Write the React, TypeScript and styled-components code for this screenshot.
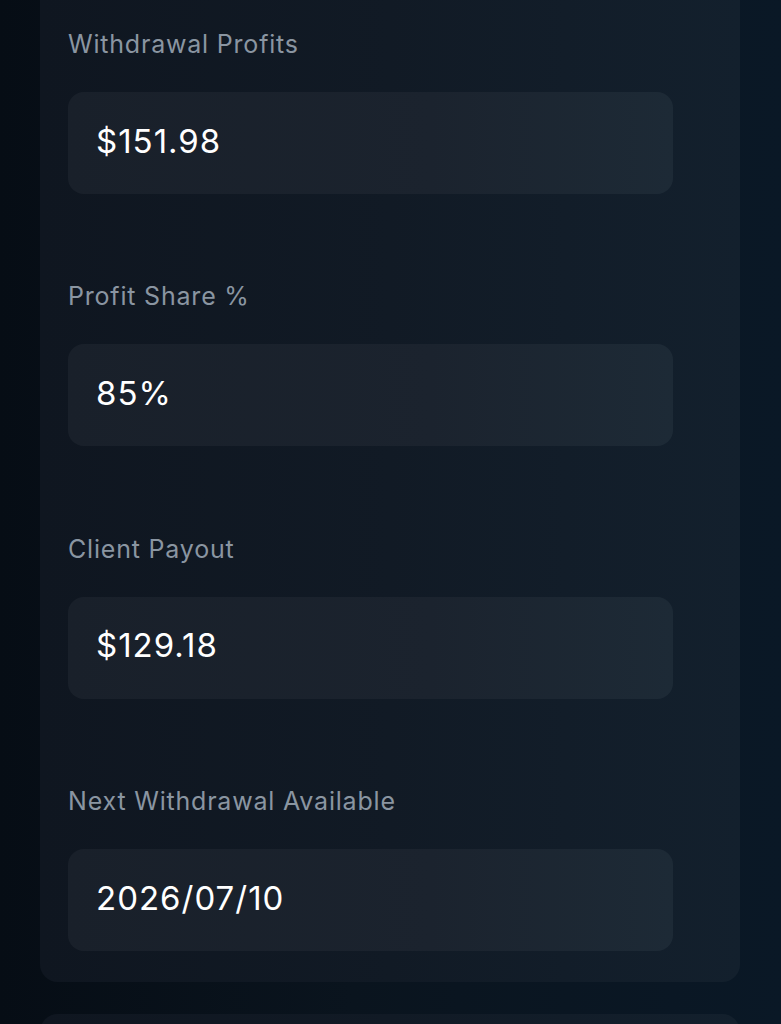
import React from "react";
import styled, { createGlobalStyle } from "styled-components";

const Global = createGlobalStyle`
  html, body {
    margin: 0;
    padding: 0;
    background: linear-gradient(90deg, #070e16 0%, #0a1520 50%, #0a1a28 100%);
    min-height: 100%;
  }
  body {
    font-family: Inter, "Noto Sans", "Liberation Sans", sans-serif;
    -webkit-font-smoothing: antialiased;
  }
`;

const Page = styled.div`
  width: 781px;
  height: 1024px;
  overflow: hidden;
  box-sizing: border-box;
  padding: 0 41px 0 40px;
  display: flex;
  flex-direction: column;
  gap: 32px;
  background: linear-gradient(90deg, #060d15 0%, #0a141e 45%, #0a1826 100%);
`;

const Card = styled.section<{ $open?: boolean; $h?: number }>`
  box-sizing: border-box;
  background: linear-gradient(90deg, #0f1620 0%, #111a25 50%, #13202d 100%);
  border-radius: ${(p) => (p.$open ? "0 0 18px 18px" : "18px")};
  padding: 28px 28px 31px;
  display: flex;
  flex-direction: column;
  gap: 86.4px;
  flex-shrink: 0;
  ${(p) => (p.$h ? `height: ${p.$h}px;` : "")}
`;

const Field = styled.div`
  display: flex;
  flex-direction: column;
  gap: 32px;
`;

const Label = styled.label`
  font-size: 25px;
  line-height: 32px;
  color: #8a95a1;
  font-weight: 400;
  letter-spacing: 0.8px;
`;

const ValueBox = styled.div`
  box-sizing: border-box;
  width: 605px;
  height: 102px;
  border-radius: 16px;
  background: linear-gradient(90deg, #19202a 0%, #1b232e 60%, #1d2a36 100%);
  display: flex;
  align-items: center;
  padding: 0 28px 5px;
  font-size: 33px;
  letter-spacing: 1px;
  color: #ffffff;
  font-weight: 400;
`;

const fields = [
  { label: "Withdrawal Profits", value: "$151.98" },
  { label: "Profit Share %", value: "85%" },
  { label: "Client Payout", value: "$129.18" },
  { label: "Next Withdrawal Available", value: "2026/07/10" },
];

export default function App() {
  return (
    <>
      <Global />
      <Page>
        <Card $open>
          {fields.map((f) => (
            <Field key={f.label}>
              <Label>{f.label}</Label>
              <ValueBox>{f.value}</ValueBox>
            </Field>
          ))}
        </Card>
        <Card $h={120} />
      </Page>
    </>
  );
}
